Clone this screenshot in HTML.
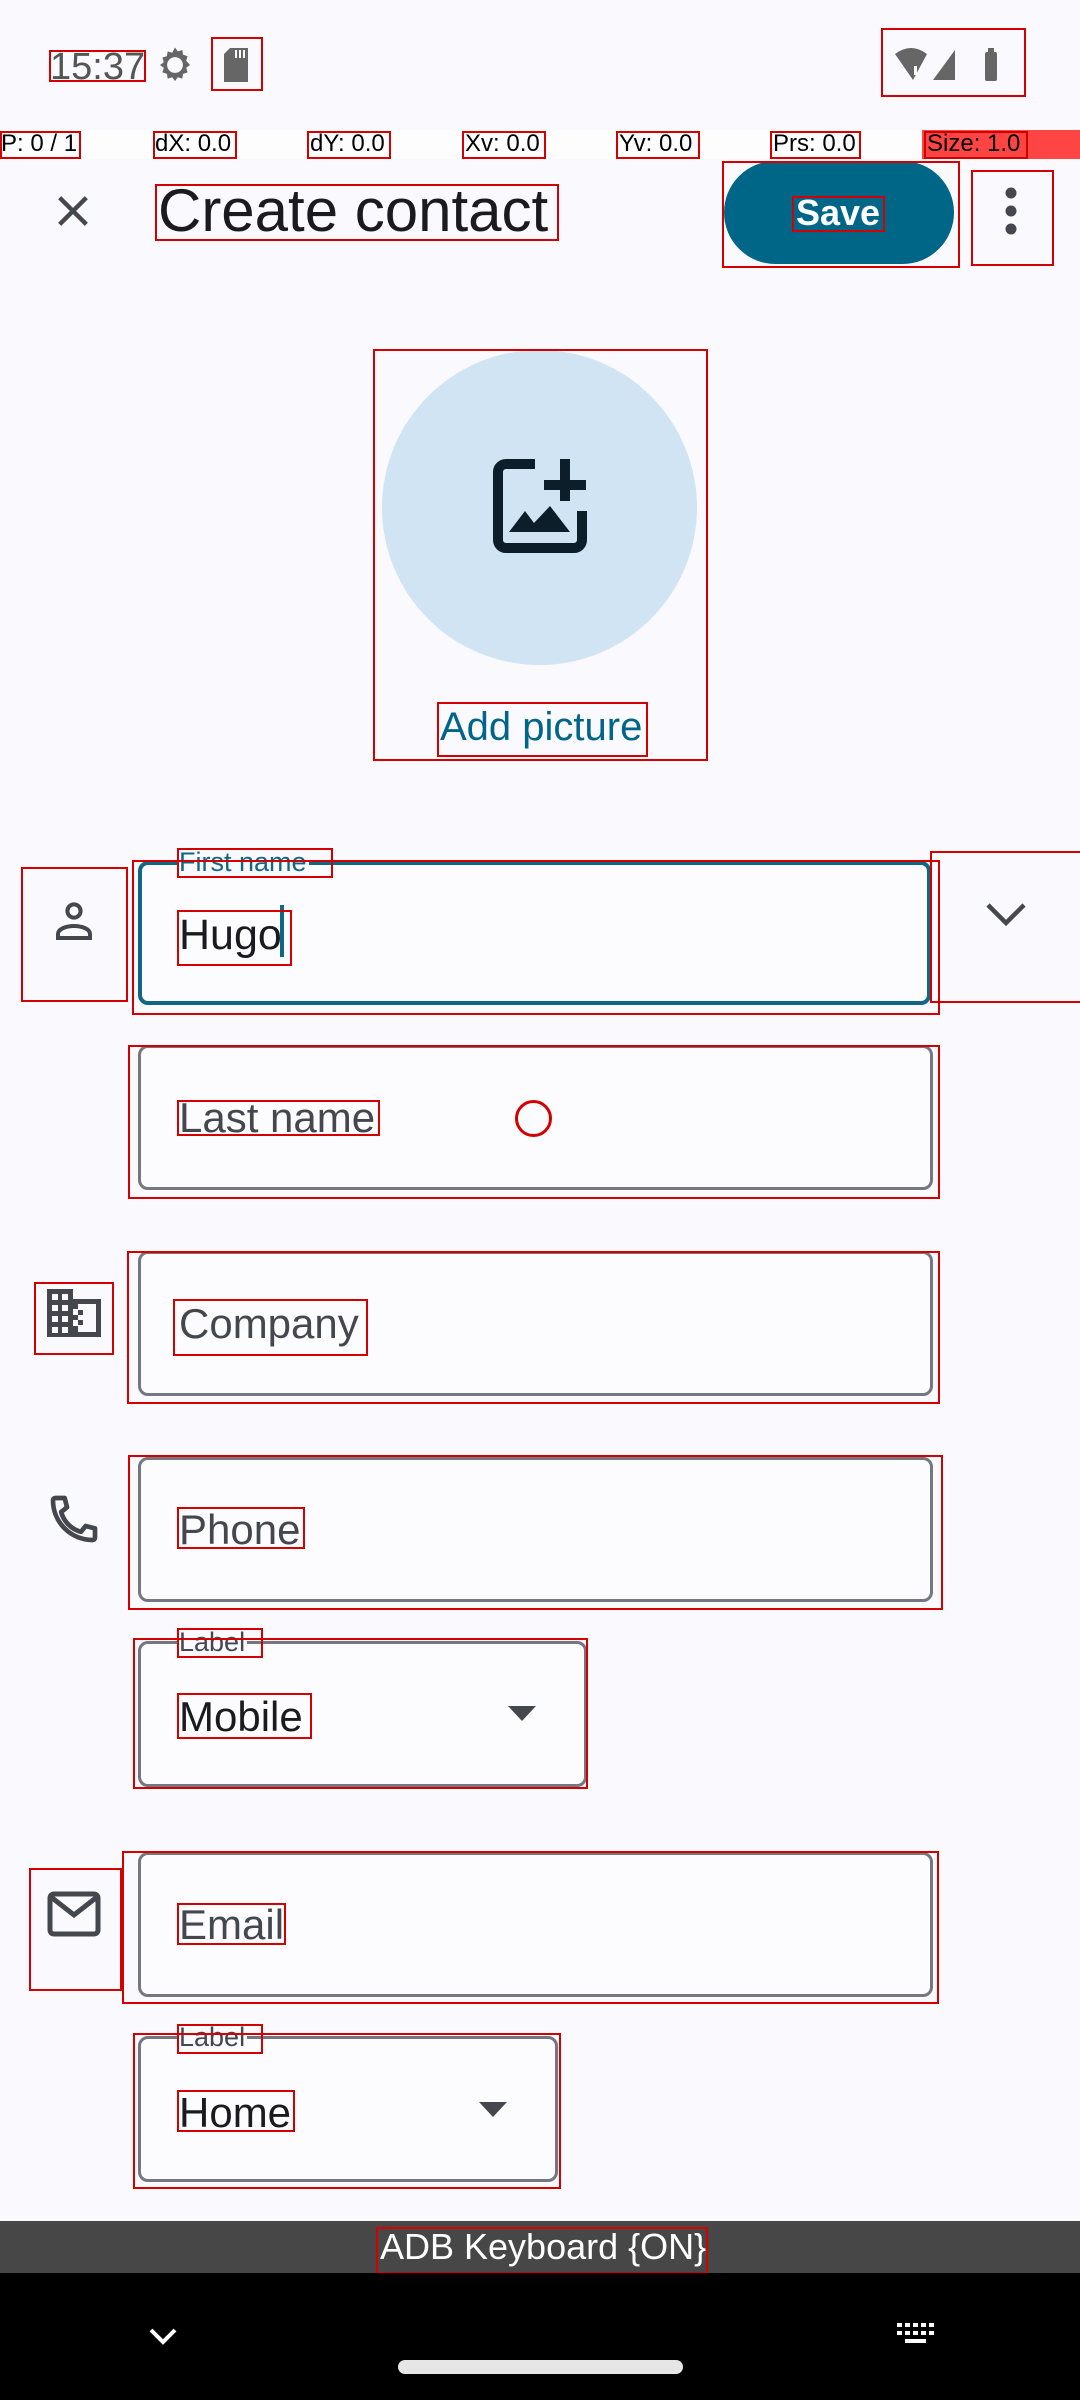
<!DOCTYPE html>
<html><head><meta charset="utf-8"><style>
*{margin:0;padding:0;box-sizing:border-box}
body{width:1080px;height:2400px;background:#faf9fd;position:relative;overflow:hidden;font-family:"Liberation Sans",sans-serif;color:#1b1b1f}
.a{position:absolute}
.r{position:absolute;border:2px solid #d40000}
.f{position:absolute;border:3px solid #74777f;border-radius:10px;background:#fcfcff}
.t{position:absolute;white-space:nowrap;line-height:1}
.dbg{position:absolute;top:130px;font-size:24px;line-height:28px;white-space:nowrap;color:#000}
.lab{position:absolute;font-size:27px;line-height:1;background:#faf9fd;padding:0 2px;color:#44474e}
</style></head><body>
<!-- status bar -->
<div class="t" style="left:50px;top:48px;font-size:38px;color:#555">15:37</div>
<svg class="a" style="left:154px;top:44px" width="42" height="42" viewBox="0 0 24 24"><path fill="#666" d="M12 2l1.6 2.2 2.6-.8.4 2.7 2.6.9-.8 2.6L20.6 12l-2.2 1.6.8 2.6-2.6.9-.4 2.7-2.6-.8L12 21.2l-1.6-2.2-2.6.8-.4-2.7-2.6-.9.8-2.6L3.4 12l2.2-1.6-.8-2.6 2.6-.9.4-2.7 2.6.8z"/><circle cx="12" cy="12" r="4.5" fill="#faf9fd"/></svg>
<svg class="a" style="left:222px;top:48px" width="28" height="34" viewBox="0 0 14 17"><path fill="#666" d="M4 0h9v17H1V3z"/><path stroke="#faf9fd" stroke-width="1" d="M7 1v4M9 1v4M11 1v4"/></svg>
<div class="r" style="left:49px;top:50px;width:97px;height:32px"></div>
<div class="r" style="left:211px;top:37px;width:52px;height:54px"></div>
<svg class="a" style="left:893px;top:46px" width="120" height="38" viewBox="0 0 120 38"><path fill="#666" d="M2 8 Q18 -4 34 8 L20 34 Z"/><rect x="21" y="20" width="3" height="9" fill="#faf9fd"/><path fill="#666" d="M40 34 L62 4 V34Z"/><rect x="92" y="6" width="12" height="29" rx="2" fill="#666"/><rect x="95" y="2" width="6" height="5" fill="#666"/></svg>
<div class="r" style="left:881px;top:28px;width:145px;height:69px"></div>
<!-- debug bar -->
<div class="a" style="left:0;top:130px;width:1080px;height:29px;background:#fdfdfd"></div>
<div class="a" style="left:922px;top:130px;width:158px;height:29px;background:#f44"></div>
<div class="dbg" style="left:1px">P: 0 / 1</div>
<div class="dbg" style="left:155px">dX: 0.0</div>
<div class="dbg" style="left:310px">dY: 0.0</div>
<div class="dbg" style="left:465px">Xv: 0.0</div>
<div class="dbg" style="left:619px">Yv: 0.0</div>
<div class="dbg" style="left:773px">Prs: 0.0</div>
<div class="dbg" style="left:927px">Size: 1.0</div>
<div class="r" style="left:0;top:131px;width:81px;height:28px"></div>
<div class="r" style="left:153px;top:131px;width:84px;height:28px"></div>
<div class="r" style="left:307px;top:131px;width:84px;height:28px"></div>
<div class="r" style="left:462px;top:131px;width:84px;height:28px"></div>
<div class="r" style="left:616px;top:131px;width:84px;height:28px"></div>
<div class="r" style="left:770px;top:131px;width:91px;height:28px"></div>
<div class="r" style="left:924px;top:131px;width:104px;height:28px"></div>
<!-- toolbar -->
<svg class="a" style="left:53px;top:191px" width="40" height="40" viewBox="0 0 24 24"><path stroke="#44474e" stroke-width="2.6" d="M4 4L20 20M20 4L4 20"/></svg>
<div class="t" style="left:158px;top:181px;font-size:60px;color:#1b1b1f">Create contact</div>
<div class="r" style="left:155px;top:184px;width:404px;height:57px"></div>
<div class="a" style="left:724px;top:161px;width:230px;height:103px;border-radius:52px;background:#006688"></div>
<div class="t" style="left:796px;top:195px;font-size:36px;color:#fff;font-weight:bold">Save</div>
<div class="r" style="left:722px;top:161px;width:238px;height:107px"></div>
<div class="r" style="left:792px;top:196px;width:93px;height:36px"></div>
<svg class="a" style="left:997px;top:186px" width="28" height="50" viewBox="0 0 28 50"><circle cx="14" cy="7" r="5.5" fill="#44474e"/><circle cx="14" cy="25" r="5.5" fill="#44474e"/><circle cx="14" cy="43" r="5.5" fill="#44474e"/></svg>
<div class="r" style="left:971px;top:170px;width:83px;height:96px"></div>
<!-- avatar -->
<div class="a" style="left:382px;top:350px;width:315px;height:315px;border-radius:50%;background:#d1e4f3"></div>
<svg class="a" style="left:493px;top:459px" width="94" height="94" viewBox="0 0 94 94"><path fill="none" stroke="#0b1e2a" stroke-width="10" d="M42 5H13a8 8 0 0 0-8 8v68a8 8 0 0 0 8 8h68a8 8 0 0 0 8-8V52"/><path stroke="#0b1e2a" stroke-width="10" d="M72 0v42M51 26h42"/><path fill="#0b1e2a" d="M16 73L32 52 41 64 57 47 77 73Z"/></svg>
<div class="t" style="left:440px;top:707px;font-size:40px;color:#00658a">Add picture</div>
<div class="r" style="left:373px;top:349px;width:335px;height:412px"></div>
<div class="r" style="left:437px;top:702px;width:211px;height:55px"></div>
<!-- first name -->
<svg class="a" style="left:50px;top:898px" width="48" height="48" viewBox="0 0 24 24"><circle cx="12" cy="6.5" r="3.3" fill="none" stroke="#44474e" stroke-width="2"/><path fill="none" stroke="#44474e" stroke-width="2" d="M4 20v-2c0-2.5 4-4 8-4s8 1.5 8 4v2z"/></svg>
<div class="r" style="left:21px;top:867px;width:107px;height:135px"></div>
<div class="f" style="left:138px;top:861px;width:793px;height:144px;border:4px solid #0f6784"></div>
<div class="lab" style="left:177px;top:849px;color:#0f6784">First name</div>
<div class="t" style="left:179px;top:914px;font-size:43px">Hugo</div>
<div class="a" style="left:280px;top:905px;width:4px;height:52px;background:#0f6784"></div>
<div class="r" style="left:132px;top:860px;width:808px;height:155px"></div>
<div class="r" style="left:177px;top:910px;width:115px;height:56px"></div>
<div class="r" style="left:177px;top:848px;width:156px;height:30px"></div>
<svg class="a" style="left:985px;top:902px" width="42" height="26" viewBox="0 0 42 26"><path fill="none" stroke="#44474e" stroke-width="4.5" d="M3 3l18 18 18-18"/></svg>
<div class="r" style="left:930px;top:851px;width:152px;height:152px"></div>
<!-- last name -->
<div class="f" style="left:138px;top:1045px;width:795px;height:145px"></div>
<div class="t" style="left:179px;top:1097px;font-size:42px;color:#44474e">Last name</div>
<div class="r" style="left:128px;top:1045px;width:812px;height:154px"></div>
<div class="r" style="left:177px;top:1100px;width:203px;height:36px"></div>
<div class="a" style="left:515px;top:1100px;width:37px;height:37px;border:3px solid #d40000;border-radius:50%"></div>
<!-- company -->
<svg class="a" style="left:47px;top:1289px" width="54" height="48" viewBox="0 0 54 48"><path fill="#44474e" d="M0 0h26v10h28v38H0z"/><g fill="#faf9fd"><rect x="5" y="5" width="6" height="6"/><rect x="15" y="5" width="6" height="6"/><rect x="5" y="16" width="6" height="6"/><rect x="15" y="16" width="6" height="6"/><rect x="5" y="27" width="6" height="6"/><rect x="15" y="27" width="6" height="6"/><rect x="5" y="38" width="6" height="6"/><rect x="15" y="38" width="6" height="6"/><rect x="26" y="15" width="23" height="28"/></g><g fill="#44474e"><rect x="31" y="21" width="5" height="5"/><rect x="31" y="31" width="5" height="5"/><rect x="26" y="15" width="5" height="5"/><rect x="26" y="26" width="5" height="5"/><rect x="26" y="37" width="5" height="6"/></g></svg>
<div class="r" style="left:34px;top:1282px;width:80px;height:73px"></div>
<div class="f" style="left:138px;top:1251px;width:795px;height:145px"></div>
<div class="t" style="left:179px;top:1303px;font-size:42px;color:#44474e">Company</div>
<div class="r" style="left:127px;top:1251px;width:813px;height:153px"></div>
<div class="r" style="left:173px;top:1299px;width:195px;height:57px"></div>
<!-- phone -->
<svg class="a" style="left:46px;top:1491px" width="56" height="56" viewBox="0 0 24 24"><path fill="none" stroke="#44474e" stroke-width="2" stroke-linejoin="round" d="M4 3h4l1 4-2.5 2a12 12 0 0 0 8.5 8.5l2-2.5 4 1v4a1 1 0 0 1-1 1A17 17 0 0 1 3 4a1 1 0 0 1 1-1z"/></svg>
<div class="f" style="left:138px;top:1457px;width:795px;height:145px"></div>
<div class="t" style="left:179px;top:1509px;font-size:42px;color:#44474e">Phone</div>
<div class="r" style="left:128px;top:1455px;width:815px;height:155px"></div>
<div class="r" style="left:177px;top:1507px;width:128px;height:42px"></div>
<!-- mobile dropdown -->
<div class="f" style="left:138px;top:1641px;width:449px;height:146px"></div>
<div class="lab" style="left:177px;top:1629px">Label</div>
<div class="t" style="left:179px;top:1696px;font-size:42px">Mobile</div>
<svg class="a" style="left:508px;top:1706px" width="28" height="15" viewBox="0 0 28 15"><path fill="#44474e" d="M0 0h28L14 15z"/></svg>
<div class="r" style="left:133px;top:1638px;width:455px;height:151px"></div>
<div class="r" style="left:177px;top:1628px;width:86px;height:30px"></div>
<div class="r" style="left:177px;top:1693px;width:135px;height:46px"></div>
<!-- email -->
<svg class="a" style="left:47px;top:1891px" width="54" height="46" viewBox="0 0 54 46"><rect x="3" y="3" width="48" height="40" rx="4" fill="none" stroke="#44474e" stroke-width="5"/><path fill="none" stroke="#44474e" stroke-width="5" d="M4 6l23 18 23-18"/></svg>
<div class="r" style="left:29px;top:1868px;width:93px;height:123px"></div>
<div class="f" style="left:138px;top:1852px;width:795px;height:145px"></div>
<div class="t" style="left:179px;top:1904px;font-size:42px;color:#44474e">Email</div>
<div class="r" style="left:122px;top:1851px;width:817px;height:153px"></div>
<div class="r" style="left:177px;top:1903px;width:109px;height:42px"></div>
<!-- home dropdown -->
<div class="f" style="left:138px;top:2036px;width:420px;height:146px"></div>
<div class="lab" style="left:177px;top:2024px">Label</div>
<div class="t" style="left:179px;top:2092px;font-size:42px">Home</div>
<svg class="a" style="left:479px;top:2102px" width="28" height="15" viewBox="0 0 28 15"><path fill="#44474e" d="M0 0h28L14 15z"/></svg>
<div class="r" style="left:133px;top:2033px;width:428px;height:156px"></div>
<div class="r" style="left:177px;top:2024px;width:86px;height:30px"></div>
<div class="r" style="left:177px;top:2090px;width:118px;height:42px"></div>
<!-- keyboard bar -->
<div class="a" style="left:0;top:2221px;width:1080px;height:52px;background:#474747"></div>
<div class="t" style="left:380px;top:2229px;font-size:36px;color:#fff">ADB Keyboard {ON}</div>
<div class="r" style="left:376px;top:2227px;width:332px;height:47px"></div>
<!-- nav bar -->
<div class="a" style="left:0;top:2273px;width:1080px;height:127px;background:#000"></div>
<svg class="a" style="left:148px;top:2327px" width="30" height="20" viewBox="0 0 30 20"><path fill="none" stroke="#fff" stroke-width="4" d="M3 3l12 12 12-12"/></svg>
<svg class="a" style="left:896px;top:2322px" width="42" height="32" viewBox="0 0 42 32"><g fill="#fff"><rect x="1" y="1" width="5" height="4"/><rect x="9" y="1" width="5" height="4"/><rect x="17" y="1" width="5" height="4"/><rect x="25" y="1" width="5" height="4"/><rect x="33" y="1" width="5" height="4"/><rect x="1" y="9" width="5" height="4"/><rect x="9" y="9" width="5" height="4"/><rect x="17" y="9" width="5" height="4"/><rect x="25" y="9" width="5" height="4"/><rect x="33" y="9" width="5" height="4"/><rect x="9" y="17" width="21" height="4"/></g></svg>
<div class="a" style="left:398px;top:2360px;width:285px;height:14px;border-radius:7px;background:#e6e6e6"></div>
</body></html>
